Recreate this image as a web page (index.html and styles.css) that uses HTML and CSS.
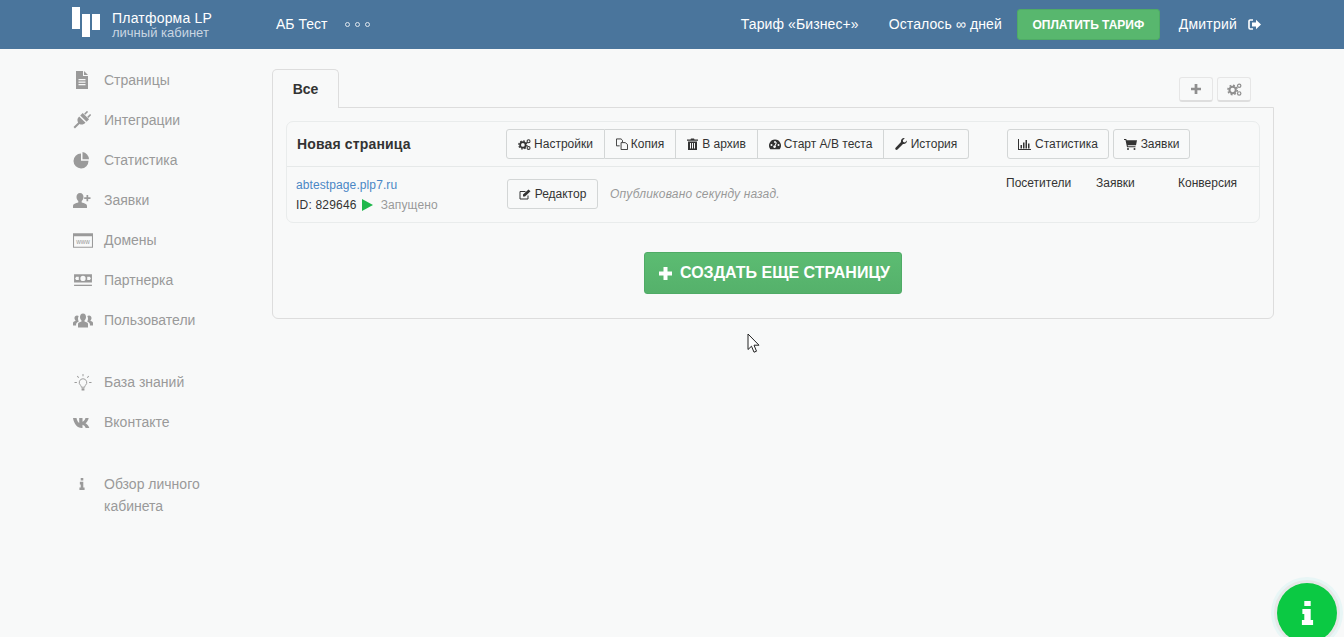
FILE: index.html
```html
<!DOCTYPE html>
<html lang="ru">
<head>
    <meta charset="UTF-8">
    <meta name="viewport" content="width=device-width, initial-scale=1.0">
    <title>Платформа LP</title>
    <link rel="stylesheet" href="styles.css">
</head>
<body>

    <svg class="defs" width="0" height="0">
        <symbol id="i-gears" viewBox="0 0 16 16">
            <circle cx="6" cy="8.5" r="3.4" fill="none" stroke="currentColor" stroke-width="2.2"/>
            <circle cx="6" cy="8.5" r="5" fill="none" stroke="currentColor" stroke-width="1.6" stroke-dasharray="2 1.9"/>
            <circle cx="13" cy="4" r="1.8" fill="none" stroke="currentColor" stroke-width="1.3"/>
            <circle cx="13" cy="12.2" r="1.8" fill="none" stroke="currentColor" stroke-width="1.3"/>
        </symbol>
    </svg>

    <!-- Шапка -->
    <header class="topbar">
        <div class="brand">
            <svg class="brand-logo" width="28" height="30" viewBox="0 0 28 30"><path d="M0 0h8v22H0zM10 7h8v23h-8zM20 7h8v16h-8z" fill="#fff"/></svg>
            <div class="brand-text">
                <div class="brand-name">Платформа LP</div>
                <div class="brand-sub">личный кабинет</div>
            </div>
        </div>
        <div class="project">АБ Тест</div>
        <div class="dots"><span></span><span></span><span></span></div>
        <div class="topbar-right">
            <span class="tariff">Тариф «Бизнес+»</span>
            <span class="days">Осталось ∞ дней</span>
            <button class="pay-btn">ОПЛАТИТЬ ТАРИФ</button>
            <span class="user">Дмитрий</span>
            <svg class="logout" width="13" height="11" viewBox="0 0 13 11"><path d="M5 1H2.2A1.2 1.2 0 0 0 1 2.2v6.6A1.2 1.2 0 0 0 2.2 10H5" fill="none" stroke="#fff" stroke-width="1.6"/><path d="M4 3.6h4V.8l5 4.7-5 4.7V7.4H4z" fill="#fff"/></svg>
        </div>
    </header>

    <div class="page">
        <!-- Боковое меню -->
        <nav class="sidebar">
            <a class="nav-item">
                <svg class="nav-icon" viewBox="0 0 18 18"><path fill-rule="evenodd" d="M3 0h7v5h5v13H3zM11 0l4 4h-4zM5.5 8v1.200h7V8zM5.5 10.500v1.200h7v-1.200zM5.5 13v1.200h7V13z"/></svg>
                Страницы
            </a>
            <a class="nav-item">
                <svg class="nav-icon" viewBox="0 0 18 18"><g transform="rotate(45 9 9)"><path d="M6 -1h1.600v4H6zM10.400 -1H12v4h-1.600zM4.500 3.500h9V7h-9zM4.500 8.500h9c0 3-1.500 4.500-3.500 5V20H8v-6.500c-2-.5-3.500-2-3.500-5z"/></g></svg>
                Интеграции
            </a>
            <a class="nav-item">
                <svg class="nav-icon" viewBox="0 0 18 18"><path d="M8 2.500v7.300h7.500A7.500 7.500 0 1 1 8 2.500zM9.500 1A7.500 7.500 0 0 1 16 8.200H9.500z"/></svg>
                Статистика
            </a>
            <a class="nav-item">
                <svg class="nav-icon" viewBox="0 0 18 18"><path d="M7 2c2.300 0 3.500 1.800 3.500 4 0 1.700-.7 3.300-1.800 4v1.500c2.500.5 5.300 1.500 5.300 3.200V17H0v-2.300c0-1.700 2.800-2.700 5.300-3.200V10c-1.100-.7-1.800-2.300-1.800-4 0-2.200 1.200-4 3.500-4zM13.500 4h1.700v2.300h2.300V8h-2.300v2.300h-1.700V8h-2.300V6.300h2.300z"/></svg>
                Заявки
            </a>
            <a class="nav-item">
                <svg class="nav-icon nav-icon-wide" viewBox="0 0 19 16"><path fill-rule="evenodd" d="M0 1h19v14H0zM1 4v10h17V4z"/><text x="9.5" y="11" class="www">www</text></svg>
                Домены
            </a>
            <a class="nav-item">
                <svg class="nav-icon nav-icon-wide" viewBox="0 0 19 16"><path fill-rule="evenodd" d="M1 2h17v8H1zM9.500 3.500a2.500 2.500 0 1 0 0 5 2.500 2.500 0 0 0 0-5zM3 4.500 2 6l1 1.500h2.500v-3zM16 4.500h-2.500v3H16l1-1.500z"/><path d="M1 12h17v1.200H1z"/></svg>
                Партнерка
            </a>
            <a class="nav-item">
                <svg class="nav-icon nav-icon-wide" viewBox="0 0 20 16"><path d="M10 1c2 0 3 1.600 3 3.500 0 1.500-.6 2.800-1.500 3.500v1c2 .4 3.500 1.200 3.500 2.500V15H5v-3.500C5 10.200 6.500 9.400 8.500 9V8C7.600 7.300 7 6 7 4.500 7 2.600 8 1 10 1zM4 3c.7 0 1.300.2 1.700.6-.4.800-.7 1.700-.7 2.700 0 1 .3 2 .8 2.700-1.300.5-2.300 1.300-2.700 2.500V13H0v-2.500c0-1 1-1.700 2.500-2V8C1.800 7.400 1.500 6.400 1.500 5.500 1.500 4 2.500 3 4 3zM16 3c1.500 0 2.500 1 2.500 2.500 0 .9-.3 1.900-1 2.500v.5c1.500.3 2.500 1 2.500 2V13h-3.100v-1.500c-.4-1.200-1.400-2-2.700-2.500.5-.7.800-1.700.8-2.700 0-1-.3-1.900-.7-2.700.4-.4 1-.6 1.700-.6z"/></svg>
                Пользователи
            </a>

            <a class="nav-item nav-gap">
                <svg class="nav-icon nav-icon-wide" viewBox="0 0 20 18"><path d="M10 5a4 4 0 0 0-2.500 7.100c.5.500.7 1 .7 1.900h3.600c0-.9.2-1.400.7-1.900A4 4 0 0 0 10 5z" fill="none" stroke="currentColor"/><path d="M8.500 15h3v2.500h-3zM9.500 0h1v2.500h-1zM3.500 2.500l.8-.7 1.600 1.800-.8.700zM15.700 1.800l.8.7-1.600 1.800-.8-.7zM1 8.500h2.500v1H1zM16.500 8.500H19v1h-2.500z"/></svg>
                База знаний
            </a>
            <a class="nav-item">
                <svg class="nav-icon nav-icon-wide" viewBox="0 0 20 14"><path d="M0 2.500h3.500c.5 2.500 1.600 4.500 2.700 5V2.500h3.300v3.800c1.200-.3 2.300-1.800 3-3.800h3.200c-.5 2.500-2 4.500-3.200 5.200 1.400.8 3 2.300 3.800 4.800h-3.600c-.7-1.800-2-3-3.200-3.300v3.300h-.8C4.300 12.500 1 8.500 0 2.500z"/></svg>
                Вконтакте
            </a>

            <a class="nav-item nav-item-tall">
                <svg class="nav-icon nav-icon-i" viewBox="0 0 8 14"><path d="M2.5 0h3v2.800h-3zM1.500 4.500h4v6.500H7v3H1v-3h1.500V7.500h-1z"/></svg>
                <span>Обзор личного<br>кабинета</span>
            </a>
        </nav>

        <!-- Основная часть -->
        <main class="content">
            <div class="tabs">
                <div class="tab">Все</div>
                <div class="tab-tools">
                    <button class="tool-btn"><svg width="10" height="10" viewBox="0 0 11 11"><path d="M4 0h3v4h4v3H7v4H4V7H0V4h4z" fill="currentColor"/></svg></button>
                    <button class="tool-btn"><svg width="15" height="15"><use href="#i-gears"/></svg></button>
                </div>
            </div>

            <div class="panel">
                <div class="card">
                    <div class="card-head">
                        <div class="card-title">Новая страница</div>
                        <div class="btn-group">
                            <button class="btn"><svg class="ic" width="13" height="13"><use href="#i-gears"/></svg>Настройки</button>
                            <button class="btn"><svg class="ic" width="12" height="12" viewBox="0 0 13 13"><path d="M.5 1h5l1.500 1.500v2M.5 1v7.500h3.500M5.500 5h4.500L12.500 7v5.500h-7z" fill="none" stroke="currentColor"/></svg>Копия</button>
                            <button class="btn"><svg class="ic ic-wide" width="11" height="12" viewBox="0 0 11 12"><path fill-rule="evenodd" d="M0 1.500h3.500L4 .5h3l.5 1H11v1.200H0zM1 3.500h9V12H1zM3 5v5.500h1V5zM5 5v5.500h1V5zM7 5v5.500h1V5z" fill="currentColor"/></svg>В архив</button>
                            <button class="btn"><svg class="ic" width="12" height="11" viewBox="0 0 12 11"><path fill-rule="evenodd" d="M6 .5A6 6 0 0 0 1.300 10.200h9.400A6 6 0 0 0 6 .5zM2.500 5a1 1 0 1 0 0 2 1 1 0 0 0 0-2zM9.500 5a1 1 0 1 0 0 2 1 1 0 0 0 0-2zM6 2a1 1 0 1 0 0 2 1 1 0 0 0 0-2zM8 3.500L6.500 6.800a1.300 1.300 0 1 1-1-.4L7 3.200z" fill="currentColor"/></svg>Старт A/B теста</button>
                            <button class="btn"><svg class="ic ic-wide" width="12" height="12" viewBox="0 0 12 12"><path d="M11.800 2.500c.4 2-1.300 4-3.800 3.500L2.500 11.600c-.6.500-1.400.5-1.900 0s-.5-1.300 0-1.900L6 4C5.500 1.700 7.500-.4 9.700.2L7.800 2.200l.4 1.800 1.800.4z" fill="currentColor"/></svg>История</button>
                        </div>
                        <div class="stat-btns">
                            <button class="btn btn-single"><svg class="ic ic-wide" width="13" height="11" viewBox="0 0 13 11"><path d="M0 0h1v10h12v1H0zM2.500 6H4v3.500H2.500zM5 3.500h1.500v6H5zM7.500 1H9v8.500H7.500zM10 4.500h1.500v5H10z" fill="currentColor"/></svg>Статистика</button>
                            <button class="btn btn-single"><svg class="ic ic-wide" width="13" height="11" viewBox="0 0 13 11"><path d="M0 0h2.300l.3 1.200H13l-1 5H3.700l.2 1H11.500v1.100H3L1.500 1H0z" fill="currentColor"/><circle cx="4" cy="10" r="1" fill="currentColor"/><circle cx="10.500" cy="10" r="1" fill="currentColor"/></svg>Заявки</button>
                        </div>
                    </div>
                    <div class="card-body">
                        <div class="page-info">
                            <a class="page-link">abtestpage.plp7.ru</a>
                            <div class="page-id">ID: 829646
                                <svg class="play" width="11" height="12" viewBox="0 0 11 12"><path d="M0 0l11 6-11 6z" fill="#1fb84c"/></svg>
                                <span class="status">Запущено</span>
                            </div>
                        </div>
                        <button class="btn btn-single btn-editor"><svg class="ic ic-wide" width="12" height="11" viewBox="0 0 12 11"><path d="M9 6.500V10H1V2.500h5.500" fill="none" stroke="currentColor"/><path d="M4 5.500L9.500.5l2 1.800L6 7.500H4z" fill="currentColor"/></svg>Редактор</button>
                        <div class="published">Опубликовано секунду назад.</div>
                        <div class="stats-cols">
                            <span class="col-visitors">Посетители</span>
                            <span class="col-leads">Заявки</span>
                            <span>Конверсия</span>
                        </div>
                    </div>
                </div>

                <div class="create-row">
                    <button class="create-btn"><svg width="13" height="13" viewBox="0 0 13 13"><path d="M4.500 0h4v4.500H13v4H8.500V13h-4V8.500H0v-4h4.500z" fill="#fff"/></svg>СОЗДАТЬ ЕЩЕ СТРАНИЦУ</button>
                </div>
            </div>
        </main>
    </div>

    <!-- Курсор и кнопка помощи лежат поверх страницы -->
    <svg class="cursor" width="14" height="21" viewBox="0 0 14 21"><path d="M1 1v15.500l3.500-3.300 2.500 6 2.500-1-2.500-6H12z" fill="#fff" stroke="#222" stroke-width="1"/></svg>
    <div class="help-btn">
        <svg width="13" height="24" viewBox="0 0 8 15"><path d="M2 0h4v3.200H2zM.8 5H6v6.800h1.500V15H.5v-3.200H2V8.200H.8z" fill="#fff"/></svg>
    </div>

</body>
</html>
```

FILE: styles.css
```css
* {
    box-sizing: border-box;
}
html, body {
    height: 100%;
    overflow: hidden;
}
body {
    margin: 0;
    background-color: #f8f9f9;
    font-family: "Liberation Sans", Arial, sans-serif;
    font-size: 14px;
    color: #333;
}
button {
    font-family: inherit;
    cursor: pointer;
}
.defs {
    position: absolute;
}

/* шапка */
.topbar {
    display: flex;
    align-items: center;
    height: 49px;
    padding: 0 83px 0 72px;
    background-color: #4a759c;
    color: #fff;
}
.brand {
    display: flex;
    align-items: flex-start;
    height: 49px;
    padding-top: 7px;
}
.brand-logo {
    margin-right: 12px;
}
.brand-text {
    width: 164px;
    padding-top: 3px;
}
.brand-name {
    line-height: 16px;
    font-size: 14px;
    letter-spacing: 0.2px;
}
.brand-sub {
    line-height: 14px;
    font-size: 13px;
    color: #c9d6e2;
}
.project {
    margin-bottom: 1px;
}
.dots {
    display: flex;
    gap: 5px;
    margin-left: 18px;
}
.dots span {
    width: 5px;
    height: 5px;
    border: 1px solid #e0e8ef;
    border-radius: 50%;
}
.topbar-right {
    display: flex;
    align-items: center;
    margin-left: auto;
}
.tariff, .days, .user {
    padding-bottom: 2px;
    letter-spacing: 0.1px;
}
.days {
    margin-left: 30px;
}
.pay-btn {
    width: 143px;
    height: 31px;
    margin-left: 15px;
    padding: 0;
    border: 1px solid #4fab66;
    border-radius: 3px;
    background-color: #58b76e;
    color: #fff;
    font-size: 12px;
    font-weight: bold;
}
.user {
    margin-left: 19px;
    letter-spacing: 0.2px;
    margin-right: 1px;
}
.logout {
    margin-left: 10px;
}

/* боковое меню */
.page {
    display: flex;
    align-items: flex-start;
}
.sidebar {
    width: 272px;
    padding: 11px 0 0 73px;
}
.nav-item {
    display: flex;
    align-items: center;
    height: 40px;
    color: #9a9a9a;
}
.nav-icon {
    width: 18px;
    height: 18px;
    margin-right: 13px;
    fill: #9a9a9a;
    color: #9a9a9a;
    flex: none;
}
.nav-icon-wide {
    width: 20px;
    height: 17px;
    margin-right: 11px;
}
.nav-icon-i {
    width: 8px;
    height: 12px;
    margin: 5px 18px 0 5px;
}
.www {
    font-size: 6px;
    text-anchor: middle;
    font-family: "Liberation Sans", sans-serif;
}
.nav-gap {
    margin-top: 22px;
}
.nav-item-tall {
    align-items: flex-start;
    height: auto;
    margin-top: 31px;
    line-height: 22px;
}

/* основная часть */
.content {
    width: 1002px;
    padding-top: 20px;
}
.tabs {
    display: flex;
    justify-content: space-between;
    height: 39px;
}
.tab {
    position: relative;
    z-index: 1;
    width: 67px;
    height: 39px;
    border: 1px solid #ddd;
    border-bottom: none;
    border-radius: 5px 5px 0 0;
    background-color: #f8f9f9;
    color: #333;
    font-weight: bold;
    line-height: 38px;
    text-align: center;
}
.tab-tools {
    display: flex;
    gap: 4px;
    margin: 8px 23px 0 0;
}
.tool-btn {
    display: flex;
    align-items: center;
    justify-content: center;
    width: 34px;
    height: 25px;
    padding: 0;
    border: 1px solid #e6e6e6;
    border-bottom: 2px solid #dedede;
    border-radius: 3px;
    background-color: #f8f9f9;
    color: #8f8f8f;
}
.panel {
    height: 212px;
    margin-top: -1px;
    padding: 13px 13px 0;
    border: 1px solid #ddd;
    border-radius: 0 0 6px 6px;
}
.card {
    height: 102px;
    border: 1px solid #e9ecec;
    border-radius: 7px;
}
.card-head {
    display: flex;
    align-items: center;
    height: 45px;
    border-bottom: 1px solid #e6e9e9;
}
.card-title {
    width: 219px;
    padding-left: 10px;
    font-weight: bold;
    letter-spacing: 0.15px;
    color: #333;
}
.btn-group {
    display: grid;
    grid-template-columns: 99px 71px 82px 126px 85px;
}
.btn {
    display: flex;
    align-items: center;
    justify-content: center;
    height: 30px;
    padding: 0;
    border: 1px solid #d3d6d6;
    border-left-width: 0;
    background-color: #f8f9f9;
    color: #333;
    font-size: 12px;
    white-space: nowrap;
}
.btn-group .btn:first-child {
    border-left-width: 1px;
    border-radius: 3px 0 0 3px;
}
.btn-group .btn:last-child {
    border-radius: 0 3px 3px 0;
}
.btn-single {
    width: 102px;
    border-left-width: 1px;
    border-radius: 3px;
}
.btn-single + .btn-single {
    width: 77px;
}
.ic {
    margin-right: 3px;
    flex: none;
}
.ic-wide {
    margin-right: 4px;
}
.stat-btns {
    display: flex;
    gap: 4px;
    margin-left: 38px;
}
.card-body {
    display: flex;
    align-items: flex-start;
    font-size: 12px;
}
.page-info {
    width: 220px;
    padding: 10px 0 0 9px;
}
.page-link {
    display: block;
    line-height: 17px;
    letter-spacing: 0.1px;
    color: #4a87c5;
}
.page-id {
    display: flex;
    align-items: center;
    margin-top: 2px;
    line-height: 18px;
    letter-spacing: 0.2px;
}
.play {
    margin-left: 5px;
}
.status {
    margin-left: 8px;
    letter-spacing: 0.1px;
    color: #999;
}
.btn-editor {
    width: 91px;
    margin-top: 12px;
}
.published {
    width: 408px;
    margin-top: 20px;
    padding-left: 12px;
    font-style: italic;
    letter-spacing: 0.15px;
    color: #999;
}
.stats-cols {
    display: flex;
    padding-top: 9px;
    line-height: 15px;
}
.col-visitors {
    width: 90px;
}
.col-leads {
    width: 82px;
}
.create-row {
    display: flex;
    justify-content: center;
    margin-top: 29px;
}
.create-btn {
    display: flex;
    align-items: center;
    gap: 8px;
    width: 258px;
    height: 42px;
    padding: 0 0 0 14px;
    border: 1px solid #4fab66;
    border-radius: 3px;
    background: linear-gradient(#5cbc72, #55b16b);
    color: #fff;
    font-size: 16px;
    font-weight: bold;
    white-space: nowrap;
}

/* поверх страницы */
.cursor {
    position: absolute;
    left: 747px;
    top: 333px;
}
.help-btn {
    position: absolute;
    left: 1277px;
    top: 583px;
    display: flex;
    align-items: center;
    justify-content: center;
    width: 60px;
    height: 60px;
    border-radius: 50%;
    background-color: #0bc943;
    box-shadow: 0 0 0 3px #e6e8e8, 0 0 0 6px #e8f6f6;
}
```
